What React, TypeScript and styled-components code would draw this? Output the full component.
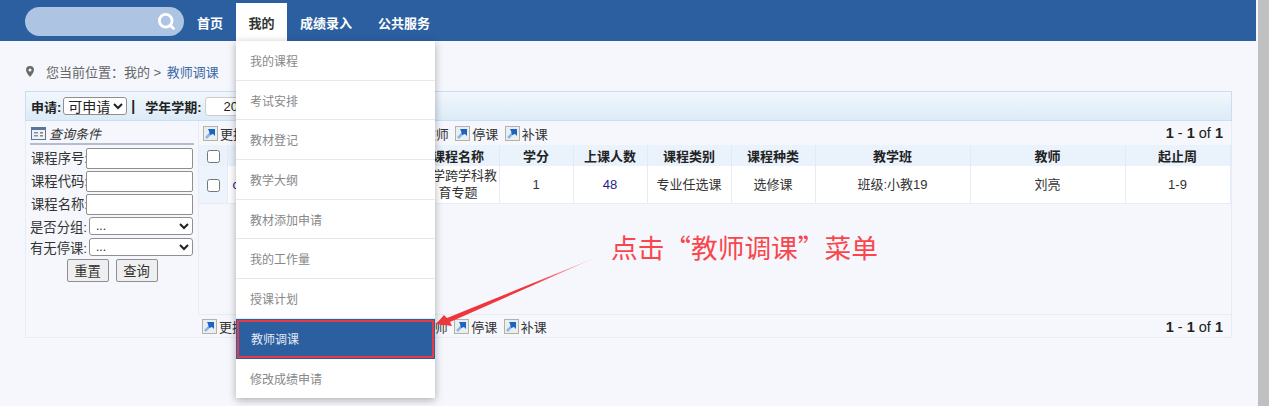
import React from "react";
import styled, { createGlobalStyle } from "styled-components";
import { Search } from "lucide-react";

const Global = createGlobalStyle`
  html, body { margin: 0; padding: 0; height: 100%; overflow: hidden; background: #f5f7fc; }
  body { font-family: "Liberation Sans", "Noto Sans CJK SC", sans-serif; color: #222; }
  * { box-sizing: border-box; }
`;

const Screen = styled.div`
  position: relative;
  width: 1269px;
  height: 406px;
  display: flex;
  overflow: hidden;
`;

const Page = styled.div`
  width: 1258px;
  display: flex;
  flex-direction: column;
`;

const Scrollbar = styled.div`
  width: 11px;
  background: #c0c0c0;
`;

const TopBar = styled.header`
  height: 41px;
  margin-right: 2px;
  background: #2c5fa0;
  display: flex;
  align-items: flex-end;
  padding-left: 25px;
`;

const SearchBox = styled.div`
  width: 159px;
  height: 29px;
  margin-bottom: 5px;
  border-radius: 15px;
  background: #adc5e3;
  color: #fff;
  display: flex;
  align-items: center;
  justify-content: flex-end;
  padding-right: 8px;
`;

const Nav = styled.nav`
  display: flex;
`;

const NavItem = styled.a<{ $active?: boolean; $w: number }>`
  width: ${(p) => p.$w}px;
  height: 38px;
  display: flex;
  align-items: center;
  justify-content: center;
  font-size: 13px;
  font-weight: 700;
  color: ${(p) => (p.$active ? "#333" : "#fff")};
  background: ${(p) => (p.$active ? "#fff" : "transparent")};
`;

const Crumb = styled.div`
  height: 50px;
  padding: 10px 0 0 26px;
  display: flex;
  align-items: center;
  font-size: 13px;
  color: #666;
`;

const CrumbText = styled.span`
  margin-left: 12px;
`;

const CrumbLink = styled.span`
  margin-left: 2px;
  color: #3b6aa5;
`;

const Panel = styled.section`
  width: 1207px;
  margin-left: 25px;
  height: 247px;
  border: 1px solid #e6ecf5;
  border-top: none;
  display: flex;
  flex-direction: column;
`;

const Toolbar = styled.div`
  height: 30px;
  flex: none;
  margin: 0 -1px;
  border: 1px solid #c9dff1;
  background: linear-gradient(#f1f7fc, #dcebf7);
  display: flex;
  align-items: center;
  padding-left: 5px;
  font-size: 13px;
  font-weight: 700;
  color: #222;
`;

const NativeSelect = styled.select<{ $w: number }>`
  width: ${(p) => p.$w}px;
  font-family: inherit;
  background: #fff;
  border: 1px solid #8f8f8f;
  border-radius: 3px;
  color: #222;
  padding: 0;
`;

const ApplySelect = styled(NativeSelect)`
  height: 18px;
  font-size: 14px;
  font-weight: 400;
  margin-left: 2px;
`;

const Sep = styled.span`
  margin: 0 10px 0 4px;
  font-size: 14px;
`;

const TermBox = styled.div`
  width: 80px;
  height: 19px;
  margin-left: 3px;
  padding-left: 18px;
  background: #fff;
  border: 1px solid #ccc;
  border-radius: 3px;
  font-weight: 400;
  font-size: 13px;
  line-height: 17px;
`;

const Body = styled.div`
  flex: 1;
  display: flex;
  min-height: 0;
`;

const Side = styled.aside`
  width: 172px;
  flex: none;
  padding: 0 4px 0 4px;
  font-size: 13.33px;
`;

const SideTitle = styled.div`
  height: 24px;
  display: flex;
  align-items: center;
  gap: 3px;
  padding: 2px 0 0 1px;
  margin-bottom: 3px;
  border-bottom: 2px solid #b4bdcf;
  font-size: 13px;
  font-style: italic;
  color: #333;
`;

const FieldRow = styled.div`
  display: flex;
  align-items: flex-start;
  height: 23px;
  color: #333;
  white-space: nowrap;
`;

const FieldLabel = styled.span<{ $w: number; $ml: number }>`
  width: ${(p) => p.$w}px;
  margin-left: ${(p) => p.$ml}px;
  flex: none;
  line-height: 21px;
`;

const FieldInput = styled.input`
  width: 107px;
  height: 21px;
  flex: none;
  background: #fff;
  border: 1px solid #8f8f8f;
  border-radius: 2px;
`;

const SelectRow = styled(FieldRow)`
  height: 21px;
`;

const FieldSelect = styled(NativeSelect)`
  height: 18px;
  font-size: 12px;
  padding-left: 2px;
  flex: none;
`;

const SideButtons = styled.div`
  display: flex;
  justify-content: center;
  gap: 7px;
`;

const SideButton = styled.button`
  width: 42px;
  height: 23px;
  padding: 0;
  background: #efefef;
  border: 1px solid #8f8f8f;
  border-radius: 2px;
  color: #333;
  font-family: inherit;
  font-size: 13.33px;
`;

const Main = styled.div`
  flex: 1;
  min-width: 0;
  display: flex;
  flex-direction: column;
`;

const Content = styled.div`
  flex: 1;
  display: flex;
  flex-direction: column;
  border-left: 1px solid #e6ecf5;
  border-bottom: 1px solid #e6ecf5;
`;

const Actions = styled.div<{ $h: number; $pt: number }>`
  height: ${(p) => p.$h}px;
  flex: none;
  display: flex;
  align-items: center;
  justify-content: space-between;
  padding: ${(p) => p.$pt}px 8px 0 4px;
  font-size: 13px;
  color: #333;
`;

const ActionGroup = styled.div`
  display: flex;
  align-items: center;
  gap: 6.4px;
`;

const Action = styled.span`
  display: flex;
  align-items: center;
  gap: 2px;
`;

const Pager = styled.span`
  font-size: 14.5px;
  color: #222;
  b { font-weight: 700; }
`;

const Grid = styled.table`
  width: 1031px;
  flex: none;
  border-collapse: collapse;
  table-layout: fixed;
  font-size: 13px;
  color: #333;
`;

const Head = styled.th`
  height: 21px;
  padding: 0;
  font-size: 13px;
  font-weight: 700;
  color: #222;
  background: #eaf2fb;
  border-right: 1px solid #e0e9f5;
`;

const Cell = styled.td<{ $blue?: boolean; $tint?: boolean; $left?: boolean }>`
  height: 37px;
  padding: ${(p) => (p.$left ? "0 0 0 5px" : "0")};
  text-align: ${(p) => (p.$left ? "left" : "center")};
  line-height: 17px;
  background: ${(p) => (p.$tint ? "#eef4fc" : "#fff")};
  color: ${(p) => (p.$blue ? "#1f1f8c" : "#333")};
  border-right: 1px solid #e6ecf5;
  border-bottom: 1px solid #e6ecf5;
`;

const Check = styled.input`
  width: 13px;
  height: 13px;
  margin: 0 0 0 1px;
  vertical-align: middle;
`;

const DropMenu = styled.ul`
  position: absolute;
  left: 236px;
  top: 41px;
  width: 199px;
  height: 357px;
  margin: 0;
  padding: 0;
  list-style: none;
  background: #fff;
  box-shadow: 0 2px 8px rgba(0, 0, 0, 0.3);
`;

const DropItem = styled.li<{ $active?: boolean }>`
  height: 39.7px;
  display: flex;
  align-items: center;
  padding-left: 14px;
  font-size: 12px;
  color: ${(p) => (p.$active ? "#e4ecf6" : "#888")};
  background: ${(p) => (p.$active ? "#2c5fa0" : "transparent")};
  border-bottom: 1px solid #e6e8ec;
  ${(p) => (p.$active ? "outline: 2px solid #e23a46; outline-offset: -3px; border: 1px solid #2c5fa0;" : "")}
  &:last-child { border-bottom: none; }
`;

const Callout = styled.div`
  position: absolute;
  left: 611px;
  top: 230px;
  font-family: "Noto Sans CJK SC", sans-serif;
  font-size: 26.7px;
  line-height: 34px;
  color: #f9464c;
  white-space: nowrap;
`;

const Arrow = styled.svg`
  position: absolute;
  left: 430px;
  top: 250px;
`;

const PinIcon = () => (
  <svg width="8" height="11" viewBox="0 0 8 11">
    <path fillRule="evenodd" d="M4 0 A4 4 0 0 1 8 4 C8 6.5 5.5 9 4 11 C2.5 9 0 6.5 0 4 A4 4 0 0 1 4 0 Z M4 2.5 A1.5 1.5 0 1 0 4 5.5 A1.5 1.5 0 1 0 4 2.5 Z" fill="#6b6b6b" />
  </svg>
);

const LinkIcon = () => (
  <svg width="15" height="15" viewBox="0 0 15 15">
    <rect x="0.5" y="0.5" width="14" height="14" fill="#e9eef3" stroke="#b3b39f" />
    <path d="M3 12 L9 6" stroke="#8db4e4" strokeWidth="2.5" />
    <path d="M5 3 H12 V10 L10 8 L7 9 L6 5 Z" fill="#1c64c4" />
  </svg>
);

const QueryIcon = () => (
  <svg width="15" height="15" viewBox="0 0 15 15">
    <rect x="0.5" y="1.5" width="14" height="12" fill="#eef2f7" stroke="#5b7499" />
    <rect x="1" y="2" width="13" height="2" fill="#5b7499" />
    <rect x="3" y="6" width="4" height="1.5" fill="#7e93b3" />
    <rect x="3" y="9" width="4" height="1.5" fill="#7e93b3" />
    <rect x="9" y="6" width="3" height="1.5" fill="#d85a5a" />
    <rect x="9" y="9" width="3" height="1.5" fill="#5aa85a" />
  </svg>
);

const ActionsBar = ({ height, top }: { height: number; top: number }) => (
  <Actions $h={height} $pt={top}>
    <ActionGroup>
      <Action><LinkIcon />更换教室</Action>
      <Action><LinkIcon />调整时间地点</Action>
      <Action><LinkIcon />更换教师</Action>
      <Action><LinkIcon />停课</Action>
      <Action><LinkIcon />补课</Action>
    </ActionGroup>
    <Pager><b>1</b> - <b>1</b> of <b>1</b></Pager>
  </Actions>
);

const columns: [string, number][] = [
  ["", 28], ["", 190], ["课程名称", 82], ["学分", 74], ["上课人数", 74], ["课程类别", 84],
  ["课程种类", 84], ["教学班", 155], ["教师", 155], ["起止周", 105],
];

const menu = ["我的课程", "考试安排", "教材登记", "教学大纲", "教材添加申请", "我的工作量", "授课计划", "教师调课", "修改成绩申请"];

export default function App() {
  return (
    <Screen>
      <Global />
      <Page>
        <TopBar>
          <SearchBox><Search size={19} strokeWidth={3.5} /></SearchBox>
          <Nav>
            <NavItem $w={52}>首页</NavItem>
            <NavItem $w={51} $active>我的</NavItem>
            <NavItem $w={78}>成绩录入</NavItem>
            <NavItem $w={78}>公共服务</NavItem>
          </Nav>
        </TopBar>
        <Crumb>
          <PinIcon />
          <CrumbText>您当前位置：我的 &gt; <CrumbLink>教师调课</CrumbLink></CrumbText>
        </Crumb>
        <Panel>
          <Toolbar>
            申请:
            <ApplySelect $w={64}><option>可申请</option></ApplySelect>
            <Sep>|</Sep>
            学年学期:
            <TermBox>20</TermBox>
          </Toolbar>
          <Body>
            <Side>
              <SideTitle><QueryIcon />查询条件</SideTitle>
              <FieldRow><FieldLabel $w={55} $ml={1}>课程序号:</FieldLabel><FieldInput /></FieldRow>
              <FieldRow><FieldLabel $w={55} $ml={1}>课程代码:</FieldLabel><FieldInput /></FieldRow>
              <FieldRow><FieldLabel $w={55} $ml={1}>课程名称:</FieldLabel><FieldInput /></FieldRow>
              <SelectRow><FieldLabel $w={59} $ml={0}>是否分组:</FieldLabel><FieldSelect $w={104}><option>...</option></FieldSelect></SelectRow>
              <SelectRow><FieldLabel $w={59} $ml={0}>有无停课:</FieldLabel><FieldSelect $w={104}><option>...</option></FieldSelect></SelectRow>
              <SideButtons>
                <SideButton>重置</SideButton>
                <SideButton>查询</SideButton>
              </SideButtons>
            </Side>
            <Main>
              <Content>
                <ActionsBar height={24} top={0} />
                <Grid>
                  <colgroup>
                    {columns.map(([, w], i) => <col key={i} style={{ width: w }} />)}
                  </colgroup>
                  <thead>
                    <tr>
                      <Head><Check type="checkbox" readOnly /></Head>
                      {columns.slice(1).map(([t], i) => <Head key={i}>{t}</Head>)}
                    </tr>
                  </thead>
                  <tbody>
                    <tr>
                      <Cell $tint><Check type="checkbox" readOnly /></Cell>
                      <Cell $blue $left>c</Cell>
                      <Cell>小学跨学科教育专题</Cell>
                      <Cell>1</Cell>
                      <Cell $blue>48</Cell>
                      <Cell>专业任选课</Cell>
                      <Cell>选修课</Cell>
                      <Cell>班级:小教19</Cell>
                      <Cell>刘亮</Cell>
                      <Cell>1-9</Cell>
                    </tr>
                  </tbody>
                </Grid>
              </Content>
              <ActionsBar height={22} top={1} />
            </Main>
          </Body>
        </Panel>
      </Page>
      <Scrollbar />
      <DropMenu>
        {menu.map((m) => <DropItem key={m} $active={m === "教师调课"}>{m}</DropItem>)}
      </DropMenu>
      <Callout>点击“教师调课”菜单</Callout>
      <Arrow width="170" height="85" viewBox="0 0 170 85">
        <defs>
          <linearGradient id="fade" x1="0" y1="1" x2="1" y2="0">
            <stop offset="0" stopColor="#f0353c" />
            <stop offset="0.6" stopColor="#f0353c" />
            <stop offset="1" stopColor="#f0353c" stopOpacity="0.1" />
          </linearGradient>
        </defs>
        <path d="M6 74 L14 65 L17 68 L167 7 L20 72 L22 76 Z" fill="url(#fade)" />
      </Arrow>
    </Screen>
  );
}
